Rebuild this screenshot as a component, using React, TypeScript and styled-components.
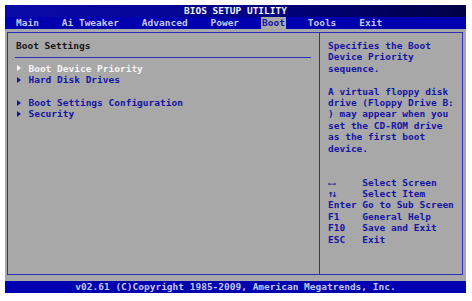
import styled, { createGlobalStyle } from 'styled-components';

const GlobalStyle = createGlobalStyle`
  html, body {
    margin: 0;
    background: #ffffff;
  }
  body {
    font-family: "DejaVu Sans Mono", "Liberation Mono", monospace;
  }
`;

const BIOS_GRAY = '#a8a8a8';
const BIOS_BLUE = '#1414a4';
const LINE_BLUE = '#2e2eb8';
const LINE = '11.4px';

// 전체 화면
const Screen = styled.div`
  width: 461px;
  margin: 5px 0 0 5px;
  font-size: 9.5px;
  line-height: ${LINE};
  font-weight: bold;
`;

const TitleBar = styled.div`
  height: 12px;
  display: flex;
  align-items: center;
  justify-content: center;
  background: linear-gradient(90deg, #0a0aa8 0%, #050596 35%, #00006e 70%, #000046 100%);
  color: #f2f2f2;
`;

const MenuBar = styled.div`
  height: 12px;
  display: flex;
  align-items: stretch;
  gap: 4ch;
  padding-left: 11px;
  background: #0000b0;
  color: #c4c8ec;
`;

const Tab = styled.div<{ $active?: boolean }>`
  display: flex;
  align-items: center;
  padding: 0 1px;
  margin: 0 -1px;
  background: ${(p) => (p.$active ? BIOS_GRAY : 'transparent')};
  color: ${(p) => (p.$active ? BIOS_BLUE : 'inherit')};
`;

const Body = styled.div`
  background: ${BIOS_GRAY};
  padding: 3px 3px 6px 2px;
`;

const Panel = styled.div`
  height: 243px;
  box-sizing: border-box;
  border: 1px solid ${LINE_BLUE};
  display: grid;
  grid-template-columns: 311px 1fr;
`;

// 왼쪽 설정 목록
const LeftPane = styled.div`
  padding: 7px 8px 0 8px;
`;

const Header = styled.div`
  color: #161616;
`;

const Rule = styled.div`
  height: ${LINE};
  display: flex;
  align-items: center;
  margin-left: -1px;

  &::after {
    content: '';
    flex: 1;
    height: 1px;
    background: ${LINE_BLUE};
  }
`;

const Item = styled.div<{ $selected?: boolean }>`
  height: ${LINE};
  display: flex;
  align-items: center;
  color: ${(p) => (p.$selected ? '#f6f6f6' : BIOS_BLUE)};
`;

const Arrow = styled.span`
  width: 2ch;
  display: flex;
  align-items: center;
  padding-left: 1px;

  &::before {
    content: '';
    width: 0;
    height: 0;
    border-left: 4px solid currentColor;
    border-top: 3px solid transparent;
    border-bottom: 3px solid transparent;
  }
`;

const Blank = styled.div`
  height: ${LINE};
`;

// 오른쪽 도움말
const RightPane = styled.div`
  border-left: 1px solid ${LINE_BLUE};
  padding: 7px 4px 0 8px;
  color: ${BIOS_BLUE};
  white-space: pre;
`;

const HelpLine = styled.div`
  height: ${LINE};
`;

const KeyRow = styled.div`
  height: ${LINE};
  display: grid;
  grid-template-columns: 6ch 1fr;
  align-items: center;
  overflow: hidden;
`;

const KeyGlyph = styled.span<{ $small?: boolean }>`
  font-size: ${(p) => (p.$small ? '7px' : 'inherit')};
  line-height: 1;
  letter-spacing: ${(p) => (p.$small ? '-0.5px' : '-2px')};
`;

const Footer = styled.div`
  height: 12px;
  display: flex;
  align-items: center;
  justify-content: center;
  background: #0000b0;
  color: #c4c8ec;
  box-shadow: 0 1px 0 #2a2a2a;
`;

const menus = ['Main', 'Ai Tweaker', 'Advanced', 'Power', 'Boot', 'Tools', 'Exit'];

const help = [
  'Specifies the Boot',
  'Device Priority',
  'sequence.',
  '',
  'A virtual floppy disk',
  'drive (Floppy Drive B:',
  ') may appear when you',
  'set the CD-ROM drive',
  'as the first boot',
  'device.',
  '',
  '',
];

const keys: [React.ReactNode, string][] = [
  [<KeyGlyph $small>←→</KeyGlyph>, 'Select Screen'],
  [<KeyGlyph>↑↓</KeyGlyph>, 'Select Item'],
  ['Enter', 'Go to Sub Screen'],
  ['F1', 'General Help'],
  ['F10', 'Save and Exit'],
  ['ESC', 'Exit'],
];

const App = () => {
  return (
    <>
      <GlobalStyle />
      <Screen>
        <TitleBar>BIOS SETUP UTILITY</TitleBar>
        <MenuBar>
          {menus.map((m) => (
            <Tab key={m} $active={m === 'Boot'}>
              {m}
            </Tab>
          ))}
        </MenuBar>
        <Body>
          <Panel>
            <LeftPane>
              <Header>Boot Settings</Header>
              <Rule />
              <Item $selected>
                <Arrow />
                Boot Device Priority
              </Item>
              <Item>
                <Arrow />
                Hard Disk Drives
              </Item>
              <Blank />
              <Item>
                <Arrow />
                Boot Settings Configuration
              </Item>
              <Item>
                <Arrow />
                Security
              </Item>
            </LeftPane>
            <RightPane>
              {help.map((line, i) => (
                <HelpLine key={i}>{line}</HelpLine>
              ))}
              {keys.map(([k, label]) => (
                <KeyRow key={label}>
                  <span>{k}</span>
                  <span>{label}</span>
                </KeyRow>
              ))}
            </RightPane>
          </Panel>
        </Body>
        <Footer>v02.61 (C)Copyright 1985-2009, American Megatrends, Inc.</Footer>
      </Screen>
    </>
  );
};

export default App;
